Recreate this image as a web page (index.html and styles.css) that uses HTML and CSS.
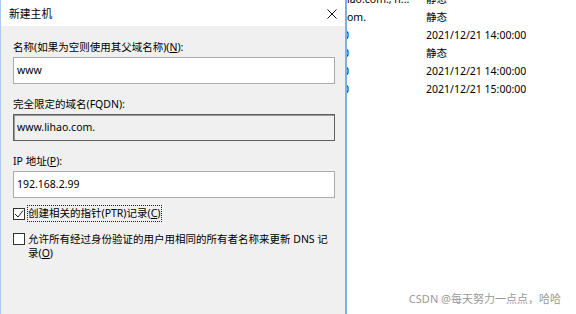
FILE: index.html
```html
<!DOCTYPE html>
<html lang="zh-CN">
<head>
<meta charset="utf-8">
<title>新建主机</title>
<link rel="stylesheet" href="styles.css">
</head>
<body>
<div class="screen">
  <div class="dialog">
    <div class="titlebar">
      <span class="title">新建主机</span>
      <svg class="close" width="10" height="10" viewBox="0 0 10 10"><path d="M0.5 0.5 L9.5 9.5 M9.5 0.5 L0.5 9.5" stroke="#111" stroke-width="1" fill="none"/></svg>
    </div>
    <div class="body">
      <div class="label">名称(如果为空则使用其父域名称)(<u>N</u>):</div>
      <div class="field">www</div>
      <div class="label gap">完全限定的域名(FQDN):</div>
      <div class="field readonly">www.lihao.com.</div>
      <div class="label gap">IP 地址(<u>P</u>):</div>
      <div class="field">192.168.2.99</div>
      <div class="check first">
        <span class="box"><svg width="10" height="10" viewBox="0 0 10 10"><path d="M1 5 L4 8 L9 1.5" stroke="#222" stroke-width="1" fill="none"/></svg></span>
        <span class="focus">创建相关的指针(PTR)记录(<u>C</u>)</span>
      </div>
      <div class="check second">
        <span class="box"></span>
        <span class="wrap">允许所有经过身份验证的用户用相同的所有者名称来更新 DNS 记录(<u>O</u>)</span>
      </div>
    </div>
  </div>
  <div class="list">
    <div class="row"><span class="c1">lao.com., n...</span><span class="c2">静态</span></div>
    <div class="row"><span class="c1">om.</span><span class="c2">静态</span></div>
    <div class="row"><span class="c1 cut">0</span><span class="c2">2021/12/21 14:00:00</span></div>
    <div class="row"><span class="c1 cut">0</span><span class="c2">静态</span></div>
    <div class="row"><span class="c1 cut">0</span><span class="c2">2021/12/21 14:00:00</span></div>
    <div class="row"><span class="c1 cut">0</span><span class="c2">2021/12/21 15:00:00</span></div>
  </div>
  <div class="watermark">CSDN @每天努力一点点，哈哈</div>
</div>
</body>
</html>
```

FILE: styles.css
```css
* { box-sizing: border-box; }
html, body { margin: 0; padding: 0; }
body {
  width: 576px;
  height: 314px;
  overflow: hidden;
  background: #fff;
  font-family: "Noto Sans", "Noto Sans CJK SC", sans-serif;
  font-size: 10.5px;
  color: #000;
}
.screen {
  position: relative;
  display: flex;
  width: 576px;
  height: 314px;
  overflow: hidden;
}
.dialog {
  width: 347px;
  height: 314px;
  flex: none;
  display: flex;
  flex-direction: column;
  border-left: 1px solid #a9cbee;
  border-right: 2px solid #78b1e8;
  background: #f0f0f0;
}
.titlebar {
  height: 26px;
  flex: none;
  background: #fff;
  display: flex;
  align-items: center;
  padding-left: 8px;
  padding-right: 8px;
}
.title {
  font-size: 10.8px;
  line-height: 16px;
  padding-top: 2px;
}
.close {
  margin-left: auto;
  display: block;
  margin-top: 1px;
}
.body {
  flex: 1;
  padding: 13px 10px 0 12px;
  display: flex;
  flex-direction: column;
}
.label {
  line-height: 16px;
  height: 16px;
  white-space: nowrap;
}
.label.gap { margin-top: 12px; }
u { text-decoration: underline; text-underline-offset: 1px; }
.field {
  margin-top: 2px;
  height: 27px;
  line-height: 25px;
  border: 1px solid #ababab;
  background: #fff;
  padding-left: 3px;
}
.field.readonly {
  background: #f0f0f0;
  border-color: #5f5f5f;
  box-shadow: inset 1px 1px 0 #9a9a9a;
}
.check {
  display: flex;
}
.check.first {
  margin-top: 7px;
  align-items: center;
  height: 17px;
}
.check.second {
  margin-top: 10px;
  align-items: flex-start;
}
.box {
  width: 12px;
  height: 12px;
  flex: none;
  border: 1px solid #333;
  background: #fff;
  display: flex;
  align-items: center;
  justify-content: center;
  margin-top: 1px;
}
.focus {
  margin-left: 2px;
  border: 1px dotted #222;
  line-height: 15px;
  padding: 0 1px 0 0;
  white-space: nowrap;
}
.wrap {
  margin-left: 2px;
  padding-left: 1px;
  line-height: 14px;
  width: 302px;
  word-break: break-all;
}
.list {
  flex: 1;
  overflow: hidden;
  margin-top: -10px;
  display: flex;
  flex-direction: column;
}
.row {
  height: 18px;
  line-height: 18px;
  display: flex;
  white-space: nowrap;
}
.c1 {
  width: 79px;
  flex: none;
  overflow: hidden;
}
.c1.cut { margin-left: -4px; width: 83px; }
.watermark {
  position: absolute;
  right: 15px;
  bottom: 8px;
  font-size: 11px;
  line-height: 14px;
  color: #9a9a9a;
  white-space: nowrap;
}
```
